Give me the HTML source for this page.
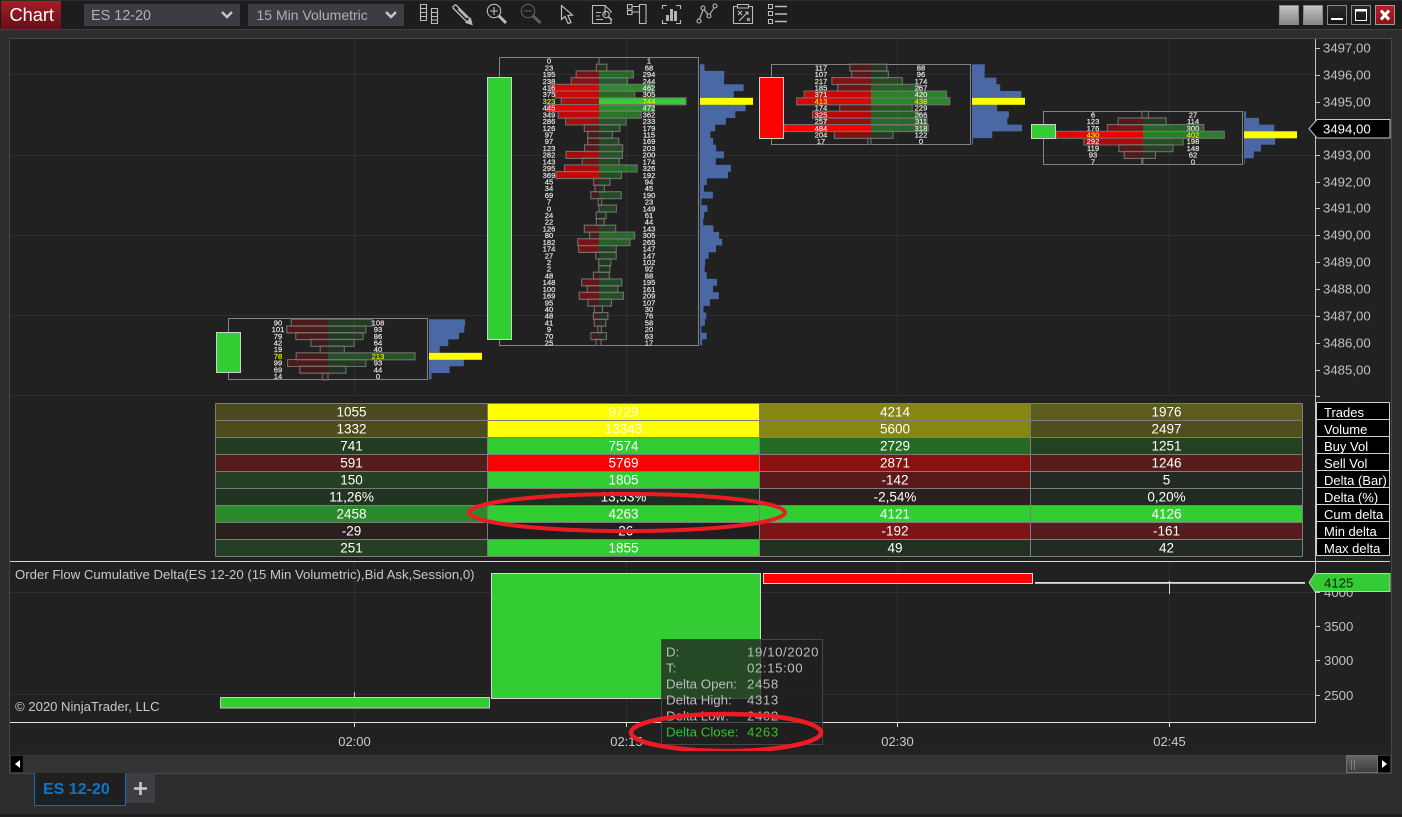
<!DOCTYPE html>
<html><head><meta charset="utf-8"><title>Chart</title>
<style>
html,body{margin:0;padding:0;width:1402px;height:817px;overflow:hidden;background:#2d2d30}
svg{display:block;font-family:"Liberation Sans",Arial,sans-serif}
.s{fill:#f00}.b{fill:#32cd32}.o{fill:none;stroke:#707070;stroke-width:1.1}
.f text{font-size:7.6px;fill:#e4e4e4;stroke:#e4e4e4;stroke-width:.2;text-anchor:middle}
.f text.p{fill:#e6e600;stroke:#e6e600}
.px{font-size:13.2px;fill:#c0c0c0}
.c{font-size:13.5px;fill:#fff;text-anchor:middle}
.l{font-size:13px;fill:#fff}
.t{font-size:13px;fill:#cacaca;text-anchor:middle}
.tip{font-size:13.3px;fill:#bcbcbc}
.tv{letter-spacing:.55px}
.i{fill:none;stroke:#bcbcbc;stroke-width:1.1}
</style></head><body>
<svg width="1402" height="817" viewBox="0 0 1402 817" xmlns="http://www.w3.org/2000/svg">
<defs>
<linearGradient id="gc" x1="0" y1="0" x2="0" y2="1"><stop offset="0" stop-color="#a51e26"/><stop offset="1" stop-color="#65101a"/></linearGradient>
<linearGradient id="gg" x1="0" y1="0" x2="0" y2="1"><stop offset="0" stop-color="#c4c4c4"/><stop offset="1" stop-color="#858585"/></linearGradient>
<linearGradient id="gd" x1="0" y1="0" x2="0" y2="1"><stop offset="0" stop-color="#2a2a2a"/><stop offset="1" stop-color="#141414"/></linearGradient>
<linearGradient id="gr" x1="0" y1="0" x2="0" y2="1"><stop offset="0" stop-color="#b52026"/><stop offset="1" stop-color="#8a1218"/></linearGradient>
<linearGradient id="gt" x1="0" y1="0" x2="0" y2="1"><stop offset="0" stop-color="#666"/><stop offset="1" stop-color="#3c3c3c"/></linearGradient>
</defs>

<!-- window chrome -->
<rect width="1402" height="817" fill="#2d2d30"/>
<rect width="1402" height="29" fill="#1d1d1d"/>
<rect y="0" width="1402" height="1" fill="#2d2d30"/>
<rect y="29" width="1402" height="1" fill="#414144"/>
<rect x="9" y="38" width="1383" height="1" fill="#47474a"/>
<rect x="1" y="1" width="60" height="28" fill="url(#gc)"/>
<text x="9.5" y="21" font-size="18.2" fill="#fff">Chart</text>
<rect x="84" y="4" width="156" height="22" fill="#3c3c42"/>
<text x="91" y="20" font-size="14.4" fill="#b0b0b0">ES 12-20</text>
<path d="M222 12l5 5 5-5" fill="none" stroke="#c8c8c8" stroke-width="2.4"/>
<rect x="248" y="4" width="156" height="22" fill="#3c3c42"/>
<text x="256.5" y="20" font-size="14" fill="#b0b0b0">15 Min Volumetric</text>
<path d="M386 12l5 5 5-5" fill="none" stroke="#c8c8c8" stroke-width="2.4"/>

<!-- toolbar icons -->
<g class="i">
<path d="M420.5 4.5h6v16h-6zM420.5 8.5h6M420.5 12.5h6M420.5 16.5h6M431.5 8.5h6v15h-6zM431.5 12.5h6M431.5 16.5h6M431.5 20h6"/>
<path d="M455.5 4.5L470.5 19.5M452.5 7.5L467.5 22.5M455.5 4.5L452.5 7.5M458 9L467 18M456 11L465 20" stroke-width="1.3"/>
<path d="M472 24.5L466 22.5L470.5 18.5z" fill="#b4b4b4"/>
<circle cx="494" cy="11" r="6.7"/><path d="M494 7v8M490 11h8"/>
<path d="M499 16L506 23" stroke-width="3"/>
<g style="stroke:#5e5e5e"><circle cx="528" cy="11" r="6.7"/><path d="M524 11h8"/><path d="M533 16L540.5 23" stroke-width="3"/></g>
<path d="M561.5 5.5V19.5L565 16.5L568 23.5L571 22.5L568 15.5L572.5 15z" stroke-width="1.2"/>
<path d="M605 15.5V5.5H592.5V23.5H611V19.5M605 5.5L611 11.5V13M596 12.5h5M596 16h4M596 19.5h7"/>
<circle cx="606" cy="14.5" r="3.2"/><path d="M608.5 17L612 20" stroke-width="1.6"/>
<path d="M627.5 4.5h4.5v4.5h-4.5zM627.5 10.5h4.5v4h-4.5zM632 6.5h8M632 12h8M639.5 4.5h6.5v19h-6.5z"/>
<path d="M662.5 9V5.5H667M676 5.5h4.5V9M662.5 20V23.5H667M676 23.5h4.5V20"/>
<path d="M666 15h3v6h-3zM670 9h3v12h-3zM674 11h3v10h-3z" fill="#b4b4b4" stroke="none"/>
<path d="M699.5 19L703 10M704 9.5L708 14.5M710 14L714 8"/>
<circle cx="699" cy="21" r="2"/><circle cx="703" cy="8" r="2"/><circle cx="709" cy="16" r="2"/><circle cx="715" cy="6" r="2"/>
<path d="M737 6.5H733.5V23.5H752.5V6.5H749M737.5 4.5h11v3.5h-11zM738 11l4 4M742 11l-4 4M747 18l3 3M750 18l-3 3M739 21L748 12M745 12h3v3"/>
<path d="M768.5 4.5h4v4h-4zM768.5 11.5h4v4h-4zM768.5 19.5h4v4h-4z"/>
<path d="M775 6.5h12M775 14h12M775 21.5h12" stroke-width="1.5"/>
</g>

<!-- window buttons -->
<rect x="1279.5" y="5.5" width="19" height="19" fill="url(#gg)" stroke="#888"/>
<rect x="1303.5" y="5.5" width="19" height="19" fill="url(#gg)" stroke="#888"/>
<rect x="1327.5" y="5.5" width="19" height="19" fill="url(#gd)" stroke="#888"/>
<rect x="1331" y="18" width="12" height="2" fill="#fff"/>
<rect x="1351.5" y="5.5" width="19" height="19" fill="url(#gd)" stroke="#888"/>
<rect x="1355.5" y="9.5" width="11" height="11" fill="none" stroke="#fff"/><rect x="1355" y="9" width="12" height="2.5" fill="#fff"/>
<rect x="1375.5" y="5.5" width="19" height="19" fill="url(#gr)" stroke="#999"/>
<path d="M1381 10.5l8 9M1389 10.5l-8 9" stroke="#fff" stroke-width="3"/>

<!-- chart panel -->
<rect x="9.5" y="38.5" width="1382" height="734" fill="#212121" stroke="#47474a"/>

<!-- grid -->
<g stroke="#2f2f2f" stroke-width="1">
<path d="M354.5 39V395M626.5 39V395M897.5 39V395M1169.5 39V395M354.5 562V722M626.5 562V722M897.5 562V722M1169.5 562V722"/>
<path d="M10 74.5H1315M10 155.5H1315M10 235.5H1315M10 315.5H1315M10 395.5H1315M10 592.5H1315M10 694.5H1315"/>
</g>

<!-- price axis -->
<rect x="1315" y="39" width="1" height="683" fill="#c4c4c4"/>
<path d="M1315 48.5h5M1315 75.5h5M1315 102.5h5M1315 155.5h5M1315 182.5h5M1315 208.5h5M1315 235.5h5M1315 262.5h5M1315 289.5h5M1315 316.5h5M1315 343.5h5M1315 370.5h5M1315 396.5h5M1315 592.5h5M1315 626.5h5M1315 660.5h5M1315 695.5h5" stroke="#c4c4c4"/>
<g class="px">
<text x="1323" y="52.5">3497,00</text>
<text x="1323" y="79.5">3496,00</text>
<text x="1323" y="106.5">3495,00</text>
<text x="1323" y="159.5">3493,00</text>
<text x="1323" y="186.5">3492,00</text>
<text x="1323" y="212.5">3491,00</text>
<text x="1323" y="239.5">3490,00</text>
<text x="1323" y="266.5">3489,00</text>
<text x="1323" y="293.5">3488,00</text>
<text x="1323" y="320.5">3487,00</text>
<text x="1323" y="347.5">3486,00</text>
<text x="1323" y="374.5">3485,00</text>
<text x="1324" y="597">4000</text>
<text x="1324" y="631">3500</text>
<text x="1324" y="665">3000</text>
<text x="1324" y="700">2500</text>
</g>
<path d="M1309 128.7L1317 119.5H1390V138H1317z" fill="#000" stroke="#c8c8c8"/>
<text x="1323" y="133.5" font-size="13.2" fill="#fff">3494,00</text>

<!-- profiles -->
<g fill="#4a68a4">
<path d="M429 319.2h36v6.8H429zM429 325.9h35.3v6.8H429zM429 332.6h30v6.8H429zM429 339.3h19.3v6.8H429zM429 346h10.7v6.8H429zM429 359.5h34.9v6.8H429zM429 366.2h20.6v6.8H429zM429 372.9h2.5v6.5H429z"/>
<path d="M700 64.2h4.5v6.8H700zM700 70.9h24.3v6.8H700zM700 77.6h24v6.8H700zM700 84.3h43.6v6.8H700zM700 91h33.8v6.8H700zM700 104.5h45.6v6.8H700zM700 111.2h35.3v6.8H700zM700 117.9h25.8v6.8H700zM700 124.6h15.2v6.8H700zM700 131.3h10.5v6.8H700zM700 138h13.2v6.8H700zM700 144.7h16.2v6.8H700zM700 151.4h24v6.8H700zM700 158.1h15.8v6.8H700zM700 164.9h30.9v6.8H700zM700 171.6h27.9v6.8H700zM700 178.3h6.9v6.8H700zM700 185h3.9v6.8H700zM700 191.7h12.9v6.8H700zM700 198.4h1.5v6.8H700zM700 205.1h7.4v6.8H700zM700 211.8h4.2v6.8H700zM700 218.5h3.3v6.8H700zM700 225.2h13.4v6.8H700zM700 232h19.1v6.8H700zM700 238.7h22.2v6.8H700zM700 245.4h16v6.8H700zM700 252.1h8.6v6.8H700zM700 258.8h5.2v6.8H700zM700 265.5h4.7v6.8H700zM700 272.2h6.8v6.8H700zM700 278.9h17v6.8H700zM700 285.6h13v6.8H700zM700 292.3h18.8v6.8H700zM700 299.1h10v6.8H700zM700 305.8h3.5v6.8H700zM700 312.5h6.2v6.8H700zM700 319.2h4.9v6.8H700zM700 325.9h1.4v6.8H700zM700 332.6h6.6v6.8H700zM700 339.3h2.1v6.2H700z"/>
<path d="M972 64.2h12.8v6.8H972zM972 70.9h12.6v6.8H972zM972 77.6h24.4v6.8H972zM972 84.3h28.2v6.8H972zM972 91h49.3v6.8H972zM972 104.5h25.1v6.8H972zM972 111.2h36.8v6.8H972zM972 117.9h35.4v6.8H972zM972 124.6h50v6.8H972zM972 131.3h20.3v6.8H972zM972 138h1v6.5H972z"/>
<path d="M1244 111.2h2.1v6.8H1244zM1244 117.9h15.1v6.8H1244zM1244 124.6h30.3v6.8H1244zM1244 138h31.2v6.8H1244zM1244 144.7h17v6.8H1244zM1244 151.4h9.9v6.8H1244zM1244 158.1h.8v6.2H1244z"/>
</g>
<g fill="#ff0">
<rect x="429" y="352.8" width="53" height="7"/>
<rect x="700" y="97.8" width="53" height="7"/>
<rect x="972" y="97.8" width="53" height="7"/>
<rect x="1244" y="131.3" width="53" height="7"/>
</g>

<!-- footprint boxes -->
<g fill="none" stroke="#838383">
<rect x="228.5" y="318.5" width="199" height="61"/>
<rect x="499.5" y="57.5" width="199" height="288"/>
<rect x="771.5" y="64.5" width="199" height="80"/>
<rect x="1043.5" y="111.5" width="199" height="53"/>
</g>

<!-- Footprint 1 -->
<g class="f" transform="translate(328 0)">
<g transform="translate(0 319.2)"><path class="s" fill-opacity=".19" d="M0 0h-36.7v7H0z"/><path class="b" fill-opacity=".15" d="M0 0h44.1v7H0z"/><path class="o" d="M-36.7 0H44.1v7H-36.7z"/><text x="-50" y="6.2">90</text><text x="50" y="6.2">108</text></g>
<g transform="translate(0 325.9)"><path class="s" fill-opacity=".21" d="M0 0h-41.2v7H0z"/><path class="b" fill-opacity=".15" d="M0 0h37.9v7H0z"/><path class="o" d="M-41.2 0H37.9v7H-41.2z"/><text x="-50" y="6.2">101</text><text x="50" y="6.2">93</text></g>
<g transform="translate(0 332.6)"><path class="s" fill-opacity=".18" d="M0 0h-32.2v7H0z"/><path class="b" fill-opacity=".15" d="M0 0h35.1v7H0z"/><path class="o" d="M-32.2 0H35.1v7H-32.2z"/><text x="-50" y="6.2">79</text><text x="50" y="6.2">86</text></g>
<g transform="translate(0 339.3)"><path class="s" fill-opacity=".12" d="M0 0h-17.1v7H0z"/><path class="b" fill-opacity=".12" d="M0 0h26.1v7H0z"/><path class="o" d="M-17.1 0H26.1v7H-17.1z"/><text x="-50" y="6.2">42</text><text x="50" y="6.2">64</text></g>
<g transform="translate(0 346)"><path class="s" fill-opacity=".1" d="M0 0h-7.8v7H0z"/><path class="b" fill-opacity=".12" d="M0 0h16.3v7H0z"/><path class="o" d="M-7.8 0H16.3v7H-7.8z"/><text x="-50" y="6.2">19</text><text x="50" y="6.2">40</text></g>
<g transform="translate(0 352.8)"><path class="s" fill-opacity=".18" d="M0 0h-31.8v7H0z"/><path class="b" fill-opacity=".29" d="M0 0h87v7H0z"/><path class="o" d="M-31.8 0H87v7H-31.8z"/><text class="p" x="-50" y="6.2">78</text><text class="p" x="50" y="6.2">213</text></g>
<g transform="translate(0 359.5)"><path class="s" fill-opacity=".2" d="M0 0h-40.4v7H0z"/><path class="b" fill-opacity=".15" d="M0 0h37.9v7H0z"/><path class="o" d="M-40.4 0H37.9v7H-40.4z"/><text x="-50" y="6.2">99</text><text x="50" y="6.2">93</text></g>
<g transform="translate(0 366.2)"><path class="s" fill-opacity=".15" d="M0 0h-28.2v7H0z"/><path class="b" fill-opacity=".1" d="M0 0h18v7H0z"/><path class="o" d="M-28.2 0H18v7H-28.2z"/><text x="-50" y="6.2">69</text><text x="50" y="6.2">44</text></g>
<g transform="translate(0 372.9)"><path class="s" fill-opacity=".1" d="M0 0h-5.7v7H0z"/><path class="o" d="M-5.7 0H0v7H-5.7z"/><text x="-50" y="6.2">14</text><text x="50" y="6.2">0</text></g>
</g>
<rect x="216.5" y="332.5" width="24" height="40" fill="#32cd32" stroke="#d0d0d0"/>

<!-- Footprint 2 -->
<g class="f" transform="translate(599 0)">
<g transform="translate(0 57.5)"><path class="o" d="M0 0v7"/><text x="-50" y="6.2">0</text><text x="50" y="6.2">1</text></g>
<g transform="translate(0 64.2)"><path class="s" fill-opacity=".15" d="M0 0h-2.7v7H0z"/><path class="b" fill-opacity=".15" d="M0 0h7.9v7H0z"/><path class="o" d="M-2.7 0H7.9v7H-2.7z"/><text x="-50" y="6.2">23</text><text x="50" y="6.2">68</text></g>
<g transform="translate(0 70.9)"><path class="s" fill-opacity=".4" d="M0 0h-22.8v7H0z"/><path class="b" fill-opacity=".4" d="M0 0h34.4v7H0z"/><path class="o" d="M-22.8 0H34.4v7H-22.8z"/><text x="-50" y="6.2">195</text><text x="50" y="6.2">294</text></g>
<g transform="translate(0 77.6)"><path class="s" fill-opacity=".49" d="M0 0h-27.8v7H0z"/><path class="b" fill-opacity=".33" d="M0 0h28.5v7H0z"/><path class="o" d="M-27.8 0H28.5v7H-27.8z"/><text x="-50" y="6.2">238</text><text x="50" y="6.2">244</text></g>
<g transform="translate(0 84.3)"><path class="s" fill-opacity=".86" d="M0 0h-48.6v7H0z"/><path class="b" fill-opacity=".62" d="M0 0h54v7H0z"/><path class="o" d="M-48.6 0H54v7H-48.6z"/><text x="-50" y="6.2">416</text><text x="50" y="6.2">462</text></g>
<g transform="translate(0 91)"><path class="s" fill-opacity=".77" d="M0 0h-43.8v7H0z"/><path class="b" fill-opacity=".41" d="M0 0h35.7v7H0z"/><path class="o" d="M-43.8 0H35.7v7H-43.8z"/><text x="-50" y="6.2">375</text><text x="50" y="6.2">305</text></g>
<g transform="translate(0 97.8)"><path class="s" fill-opacity=".67" d="M0 0h-37.8v7H0z"/><path class="b" d="M0 0h87v7H0z"/><path class="o" d="M-37.8 0H87v7H-37.8z"/><text class="p" x="-50" y="6.2">323</text><text class="p" x="50" y="6.2">744</text></g>
<g transform="translate(0 104.5)"><path class="s" fill-opacity=".92" d="M0 0h-52v7H0z"/><path class="b" fill-opacity=".63" d="M0 0h55.2v7H0z"/><path class="o" d="M-52 0H55.2v7H-52z"/><text x="-50" y="6.2">445</text><text x="50" y="6.2">472</text></g>
<g transform="translate(0 111.2)"><path class="s" fill-opacity=".72" d="M0 0h-40.8v7H0z"/><path class="b" fill-opacity=".49" d="M0 0h42.3v7H0z"/><path class="o" d="M-40.8 0H42.3v7H-40.8z"/><text x="-50" y="6.2">349</text><text x="50" y="6.2">362</text></g>
<g transform="translate(0 117.9)"><path class="s" fill-opacity=".59" d="M0 0h-33.4v7H0z"/><path class="b" fill-opacity=".31" d="M0 0h27.2v7H0z"/><path class="o" d="M-33.4 0H27.2v7H-33.4z"/><text x="-50" y="6.2">286</text><text x="50" y="6.2">233</text></g>
<g transform="translate(0 124.6)"><path class="s" fill-opacity=".26" d="M0 0h-14.7v7H0z"/><path class="b" fill-opacity=".24" d="M0 0h20.9v7H0z"/><path class="o" d="M-14.7 0H20.9v7H-14.7z"/><text x="-50" y="6.2">126</text><text x="50" y="6.2">179</text></g>
<g transform="translate(0 131.3)"><path class="s" fill-opacity=".2" d="M0 0h-11.3v7H0z"/><path class="b" fill-opacity=".15" d="M0 0h13.4v7H0z"/><path class="o" d="M-11.3 0H13.4v7H-11.3z"/><text x="-50" y="6.2">97</text><text x="50" y="6.2">115</text></g>
<g transform="translate(0 138)"><path class="s" fill-opacity=".2" d="M0 0h-11.3v7H0z"/><path class="b" fill-opacity=".23" d="M0 0h19.8v7H0z"/><path class="o" d="M-11.3 0H19.8v7H-11.3z"/><text x="-50" y="6.2">97</text><text x="50" y="6.2">169</text></g>
<g transform="translate(0 144.7)"><path class="s" fill-opacity=".25" d="M0 0h-14.4v7H0z"/><path class="b" fill-opacity=".27" d="M0 0h23.7v7H0z"/><path class="o" d="M-14.4 0H23.7v7H-14.4z"/><text x="-50" y="6.2">123</text><text x="50" y="6.2">203</text></g>
<g transform="translate(0 151.4)"><path class="s" fill-opacity=".58" d="M0 0h-33v7H0z"/><path class="b" fill-opacity=".27" d="M0 0h23.4v7H0z"/><path class="o" d="M-33 0H23.4v7H-33z"/><text x="-50" y="6.2">282</text><text x="50" y="6.2">200</text></g>
<g transform="translate(0 158.1)"><path class="s" fill-opacity=".3" d="M0 0h-16.7v7H0z"/><path class="b" fill-opacity=".23" d="M0 0h20.3v7H0z"/><path class="o" d="M-16.7 0H20.3v7H-16.7z"/><text x="-50" y="6.2">143</text><text x="50" y="6.2">174</text></g>
<g transform="translate(0 164.9)"><path class="s" fill-opacity=".61" d="M0 0h-34.5v7H0z"/><path class="b" fill-opacity=".44" d="M0 0h38.1v7H0z"/><path class="o" d="M-34.5 0H38.1v7H-34.5z"/><text x="-50" y="6.2">295</text><text x="50" y="6.2">326</text></g>
<g transform="translate(0 171.6)"><path class="s" fill-opacity=".76" d="M0 0h-43.1v7H0z"/><path class="b" fill-opacity=".26" d="M0 0h22.4v7H0z"/><path class="o" d="M-43.1 0H22.4v7H-43.1z"/><text x="-50" y="6.2">369</text><text x="50" y="6.2">192</text></g>
<g transform="translate(0 178.3)"><path class="s" fill-opacity=".15" d="M0 0h-5.3v7H0z"/><path class="b" fill-opacity=".15" d="M0 0h11v7H0z"/><path class="o" d="M-5.3 0H11v7H-5.3z"/><text x="-50" y="6.2">45</text><text x="50" y="6.2">94</text></g>
<g transform="translate(0 185)"><path class="s" fill-opacity=".15" d="M0 0h-4v7H0z"/><path class="b" fill-opacity=".1" d="M0 0h5.3v7H0z"/><path class="o" d="M-4 0H5.3v7H-4z"/><text x="-50" y="6.2">34</text><text x="50" y="6.2">45</text></g>
<g transform="translate(0 191.7)"><path class="s" fill-opacity=".16" d="M0 0h-8.1v7H0z"/><path class="b" fill-opacity=".26" d="M0 0h22.2v7H0z"/><path class="o" d="M-8.1 0H22.2v7H-8.1z"/><text x="-50" y="6.2">69</text><text x="50" y="6.2">190</text></g>
<g transform="translate(0 198.4)"><path class="o" d="M-.8 0H2.7v7H-.8z"/><text x="-50" y="6.2">7</text><text x="50" y="6.2">23</text></g>
<g transform="translate(0 205.1)"><path class="b" fill-opacity=".2" d="M0 0h17.4v7H0z"/><path class="o" d="M0 0H17.4v7H0z"/><text x="-50" y="6.2">0</text><text x="50" y="6.2">149</text></g>
<g transform="translate(0 211.8)"><path class="b" fill-opacity=".1" d="M0 0h7.1v7H0z"/><path class="o" d="M-2.8 0H7.1v7H-2.8z"/><text x="-50" y="6.2">24</text><text x="50" y="6.2">61</text></g>
<g transform="translate(0 218.5)"><path class="b" fill-opacity=".08" d="M0 0h5.1v7H0z"/><path class="o" d="M-2.6 0H5.1v7H-2.6z"/><text x="-50" y="6.2">22</text><text x="50" y="6.2">44</text></g>
<g transform="translate(0 225.2)"><path class="s" fill-opacity=".26" d="M0 0h-14.7v7H0z"/><path class="b" fill-opacity=".19" d="M0 0h16.7v7H0z"/><path class="o" d="M-14.7 0H16.7v7H-14.7z"/><text x="-50" y="6.2">126</text><text x="50" y="6.2">143</text></g>
<g transform="translate(0 232)"><path class="s" fill-opacity=".17" d="M0 0h-9.4v7H0z"/><path class="b" fill-opacity=".41" d="M0 0h35.7v7H0z"/><path class="o" d="M-9.4 0H35.7v7H-9.4z"/><text x="-50" y="6.2">80</text><text x="50" y="6.2">305</text></g>
<g transform="translate(0 238.7)"><path class="s" fill-opacity=".38" d="M0 0h-21.3v7H0z"/><path class="b" fill-opacity=".36" d="M0 0h31v7H0z"/><path class="o" d="M-21.3 0H31v7H-21.3z"/><text x="-50" y="6.2">182</text><text x="50" y="6.2">265</text></g>
<g transform="translate(0 245.4)"><path class="s" fill-opacity=".36" d="M0 0h-20.3v7H0z"/><path class="b" fill-opacity=".2" d="M0 0h17.2v7H0z"/><path class="o" d="M-20.3 0H17.2v7H-20.3z"/><text x="-50" y="6.2">174</text><text x="50" y="6.2">147</text></g>
<g transform="translate(0 252.1)"><path class="s" fill-opacity=".1" d="M0 0h-3.2v7H0z"/><path class="b" fill-opacity=".2" d="M0 0h17.2v7H0z"/><path class="o" d="M-3.2 0H17.2v7H-3.2z"/><text x="-50" y="6.2">27</text><text x="50" y="6.2">147</text></g>
<g transform="translate(0 258.8)"><path class="b" fill-opacity=".14" d="M0 0h11.9v7H0z"/><path class="o" d="M-.2 0H11.9v7H-.2z"/><text x="-50" y="6.2">2</text><text x="50" y="6.2">102</text></g>
<g transform="translate(0 265.5)"><path class="b" fill-opacity=".12" d="M0 0h10.8v7H0z"/><path class="o" d="M-.2 0H10.8v7H-.2z"/><text x="-50" y="6.2">2</text><text x="50" y="6.2">92</text></g>
<g transform="translate(0 272.2)"><path class="s" fill-opacity=".15" d="M0 0h-5.6v7H0z"/><path class="b" fill-opacity=".12" d="M0 0h10.3v7H0z"/><path class="o" d="M-5.6 0H10.3v7H-5.6z"/><text x="-50" y="6.2">48</text><text x="50" y="6.2">88</text></g>
<g transform="translate(0 278.9)"><path class="s" fill-opacity=".31" d="M0 0h-17.3v7H0z"/><path class="b" fill-opacity=".26" d="M0 0h22.8v7H0z"/><path class="o" d="M-17.3 0H22.8v7H-17.3z"/><text x="-50" y="6.2">148</text><text x="50" y="6.2">195</text></g>
<g transform="translate(0 285.6)"><path class="s" fill-opacity=".21" d="M0 0h-11.7v7H0z"/><path class="b" fill-opacity=".22" d="M0 0h18.8v7H0z"/><path class="o" d="M-11.7 0H18.8v7H-11.7z"/><text x="-50" y="6.2">100</text><text x="50" y="6.2">161</text></g>
<g transform="translate(0 292.3)"><path class="s" fill-opacity=".35" d="M0 0h-19.8v7H0z"/><path class="b" fill-opacity=".28" d="M0 0h24.4v7H0z"/><path class="o" d="M-19.8 0H24.4v7H-19.8z"/><text x="-50" y="6.2">169</text><text x="50" y="6.2">209</text></g>
<g transform="translate(0 299.1)"><path class="s" fill-opacity=".2" d="M0 0h-11.1v7H0z"/><path class="b" fill-opacity=".15" d="M0 0h12.5v7H0z"/><path class="o" d="M-11.1 0H12.5v7H-11.1z"/><text x="-50" y="6.2">95</text><text x="50" y="6.2">107</text></g>
<g transform="translate(0 305.8)"><path class="s" fill-opacity=".12" d="M0 0h-4.7v7H0z"/><path class="b" fill-opacity=".05" d="M0 0h3.5v7H0z"/><path class="o" d="M-4.7 0H3.5v7H-4.7z"/><text x="-50" y="6.2">40</text><text x="50" y="6.2">30</text></g>
<g transform="translate(0 312.5)"><path class="s" fill-opacity=".15" d="M0 0h-5.6v7H0z"/><path class="b" fill-opacity=".1" d="M0 0h8.9v7H0z"/><path class="o" d="M-5.6 0H8.9v7H-5.6z"/><text x="-50" y="6.2">48</text><text x="50" y="6.2">76</text></g>
<g transform="translate(0 319.2)"><path class="s" fill-opacity=".12" d="M0 0h-4.8v7H0z"/><path class="b" fill-opacity=".08" d="M0 0h6.8v7H0z"/><path class="o" d="M-4.8 0H6.8v7H-4.8z"/><text x="-50" y="6.2">41</text><text x="50" y="6.2">58</text></g>
<g transform="translate(0 325.9)"><path class="o" d="M-1.1 0H2.3v7H-1.1z"/><text x="-50" y="6.2">9</text><text x="50" y="6.2">20</text></g>
<g transform="translate(0 332.6)"><path class="s" fill-opacity=".15" d="M0 0h-8.2v7H0z"/><path class="b" fill-opacity=".08" d="M0 0h7.4v7H0z"/><path class="o" d="M-8.2 0H7.4v7H-8.2z"/><text x="-50" y="6.2">70</text><text x="50" y="6.2">63</text></g>
<g transform="translate(0 339.3)"><path class="o" d="M-2.9 0H2v6.2H-2.9z"/><text x="-50" y="6.2">25</text><text x="50" y="6.2">17</text></g>
</g>
<rect x="487.5" y="77.5" width="24" height="262" fill="#32cd32" stroke="#d0d0d0"/>

<!-- Footprint 3 -->
<g class="f" transform="translate(871 0)">
<g transform="translate(0 64.2)"><path class="s" fill-opacity=".24" d="M0 0h-21.1v7H0z"/><path class="b" fill-opacity=".12" d="M0 0h15.8v7H0z"/><path class="o" d="M-21.1 0H15.8v7H-21.1z"/><text x="-50" y="6.2">117</text><text x="50" y="6.2">88</text></g>
<g transform="translate(0 70.9)"><path class="s" fill-opacity=".22" d="M0 0h-19.3v7H0z"/><path class="b" fill-opacity=".13" d="M0 0h17.3v7H0z"/><path class="o" d="M-19.3 0H17.3v7H-19.3z"/><text x="-50" y="6.2">107</text><text x="50" y="6.2">96</text></g>
<g transform="translate(0 77.6)"><path class="s" fill-opacity=".45" d="M0 0h-39.1v7H0z"/><path class="b" fill-opacity=".23" d="M0 0h31.3v7H0z"/><path class="o" d="M-39.1 0H31.3v7H-39.1z"/><text x="-50" y="6.2">217</text><text x="50" y="6.2">174</text></g>
<g transform="translate(0 84.3)"><path class="s" fill-opacity=".38" d="M0 0h-33.3v7H0z"/><path class="b" fill-opacity=".36" d="M0 0h48.1v7H0z"/><path class="o" d="M-33.3 0H48.1v7H-33.3z"/><text x="-50" y="6.2">185</text><text x="50" y="6.2">267</text></g>
<g transform="translate(0 91)"><path class="s" fill-opacity=".77" d="M0 0h-66.8v7H0z"/><path class="b" fill-opacity=".56" d="M0 0h75.6v7H0z"/><path class="o" d="M-66.8 0H75.6v7H-66.8z"/><text x="-50" y="6.2">371</text><text x="50" y="6.2">420</text></g>
<g transform="translate(0 97.8)"><path class="s" fill-opacity=".85" d="M0 0h-74.3v7H0z"/><path class="b" fill-opacity=".59" d="M0 0h78.8v7H0z"/><path class="o" d="M-74.3 0H78.8v7H-74.3z"/><text class="p" x="-50" y="6.2">413</text><text class="p" x="50" y="6.2">438</text></g>
<g transform="translate(0 104.5)"><path class="s" fill-opacity=".36" d="M0 0h-31.3v7H0z"/><path class="b" fill-opacity=".31" d="M0 0h41.2v7H0z"/><path class="o" d="M-31.3 0H41.2v7H-31.3z"/><text x="-50" y="6.2">174</text><text x="50" y="6.2">229</text></g>
<g transform="translate(0 111.2)"><path class="s" fill-opacity=".67" d="M0 0h-58.5v7H0z"/><path class="b" fill-opacity=".36" d="M0 0h47.9v7H0z"/><path class="o" d="M-58.5 0H47.9v7H-58.5z"/><text x="-50" y="6.2">325</text><text x="50" y="6.2">266</text></g>
<g transform="translate(0 117.9)"><path class="s" fill-opacity=".53" d="M0 0h-46.3v7H0z"/><path class="b" fill-opacity=".42" d="M0 0h56v7H0z"/><path class="o" d="M-46.3 0H56v7H-46.3z"/><text x="-50" y="6.2">257</text><text x="50" y="6.2">311</text></g>
<g transform="translate(0 124.6)"><path class="s" d="M0 0h-87.1v7H0z"/><path class="b" fill-opacity=".43" d="M0 0h57.2v7H0z"/><path class="o" d="M-87.1 0H57.2v7H-87.1z"/><text x="-50" y="6.2">484</text><text x="50" y="6.2">318</text></g>
<g transform="translate(0 131.3)"><path class="s" fill-opacity=".42" d="M0 0h-36.7v7H0z"/><path class="b" fill-opacity=".16" d="M0 0h22v7H0z"/><path class="o" d="M-36.7 0H22v7H-36.7z"/><text x="-50" y="6.2">204</text><text x="50" y="6.2">122</text></g>
<g transform="translate(0 138)"><path class="o" d="M-3.1 0H0v6.5H-3.1z"/><text x="-50" y="6.2">17</text><text x="50" y="6.2">0</text></g>
</g>
<rect x="759.5" y="77.5" width="24" height="61" fill="#f00" stroke="#d0d0d0"/>

<!-- Footprint 4 -->
<g class="f" transform="translate(1143 0)">
<g transform="translate(0 111.2)"><path class="b" fill-opacity=".08" d="M0 0h5.5v7H0z"/><path class="o" d="M-1.2 0H5.5v7H-1.2z"/><text x="-50" y="6.2">6</text><text x="50" y="6.2">27</text></g>
<g transform="translate(0 117.9)"><path class="s" fill-opacity=".25" d="M0 0h-24.9v7H0z"/><path class="b" fill-opacity=".15" d="M0 0h23.1v7H0z"/><path class="o" d="M-24.9 0H23.1v7H-24.9z"/><text x="-50" y="6.2">123</text><text x="50" y="6.2">114</text></g>
<g transform="translate(0 124.6)"><path class="s" fill-opacity=".36" d="M0 0h-35.6v7H0z"/><path class="b" fill-opacity=".4" d="M0 0h60.7v7H0z"/><path class="o" d="M-35.6 0H60.7v7H-35.6z"/><text x="-50" y="6.2">176</text><text x="50" y="6.2">300</text></g>
<g transform="translate(0 131.3)"><path class="s" fill-opacity=".89" d="M0 0h-87v7H0z"/><path class="b" fill-opacity=".54" d="M0 0h81.3v7H0z"/><path class="o" d="M-87 0H81.3v7H-87z"/><text class="p" x="-50" y="6.2">430</text><text class="p" x="50" y="6.2">402</text></g>
<g transform="translate(0 138)"><path class="s" fill-opacity=".6" d="M0 0h-59.1v7H0z"/><path class="b" fill-opacity=".27" d="M0 0h40.1v7H0z"/><path class="o" d="M-59.1 0H40.1v7H-59.1z"/><text x="-50" y="6.2">292</text><text x="50" y="6.2">198</text></g>
<g transform="translate(0 144.7)"><path class="s" fill-opacity=".25" d="M0 0h-24.1v7H0z"/><path class="b" fill-opacity=".2" d="M0 0h29.9v7H0z"/><path class="o" d="M-24.1 0H29.9v7H-24.1z"/><text x="-50" y="6.2">119</text><text x="50" y="6.2">148</text></g>
<g transform="translate(0 151.4)"><path class="s" fill-opacity=".19" d="M0 0h-18.8v7H0z"/><path class="b" fill-opacity=".08" d="M0 0h12.5v7H0z"/><path class="o" d="M-18.8 0H12.5v7H-18.8z"/><text x="-50" y="6.2">93</text><text x="50" y="6.2">62</text></g>
<g transform="translate(0 158.1)"><path class="o" d="M-1.4 0H0v6H-1.4z"/><text x="-50" y="6.2">7</text><text x="50" y="6.2">0</text></g>
</g>
<rect x="1031.5" y="124.5" width="24" height="14" fill="#32cd32" stroke="#d0d0d0"/>

<!-- Table -->
<g>
<rect x="215.5" y="403.5" width="272" height="17" fill="#4a4a1d"/><rect x="487.5" y="403.5" width="272" height="17" fill="#ff0"/><rect x="759.5" y="403.5" width="271" height="17" fill="#868612"/><rect x="1030.5" y="403.5" width="272" height="17" fill="#5c5c1e"/>
<rect x="215.5" y="420.5" width="272" height="17" fill="#4c4c1d"/><rect x="487.5" y="420.5" width="272" height="17" fill="#ff0"/><rect x="759.5" y="420.5" width="271" height="17" fill="#868612"/><rect x="1030.5" y="420.5" width="272" height="17" fill="#4f4f1e"/>
<rect x="215.5" y="437.5" width="272" height="17" fill="#223d22"/><rect x="487.5" y="437.5" width="272" height="17" fill="#32cd32"/><rect x="759.5" y="437.5" width="271" height="17" fill="#266a28"/><rect x="1030.5" y="437.5" width="272" height="17" fill="#224222"/>
<rect x="215.5" y="454.5" width="272" height="17" fill="#551c1c"/><rect x="487.5" y="454.5" width="272" height="17" fill="#f00"/><rect x="759.5" y="454.5" width="271" height="17" fill="#8b1010"/><rect x="1030.5" y="454.5" width="272" height="17" fill="#571c1c"/>
<rect x="215.5" y="471.5" width="272" height="17" fill="#243f24"/><rect x="487.5" y="471.5" width="272" height="17" fill="#32cd32"/><rect x="759.5" y="471.5" width="271" height="17" fill="#581a1a"/><rect x="1030.5" y="471.5" width="272" height="17" fill="#212b23"/>
<rect x="215.5" y="488.5" width="272" height="17" fill="#213421"/><rect x="487.5" y="488.5" width="272" height="17" fill="#1f2f1f"/><rect x="759.5" y="488.5" width="271" height="17" fill="#2b1f20"/><rect x="1030.5" y="488.5" width="272" height="17" fill="#212b23"/>
<rect x="215.5" y="505.5" width="272" height="17" fill="#2b8a2b"/><rect x="487.5" y="505.5" width="272" height="17" fill="#32cd32"/><rect x="759.5" y="505.5" width="271" height="17" fill="#32cd32"/><rect x="1030.5" y="505.5" width="272" height="17" fill="#32cd32"/>
<rect x="215.5" y="522.5" width="272" height="17" fill="#2a1f1f"/><rect x="487.5" y="522.5" width="272" height="17" fill="#1f1f1f"/><rect x="759.5" y="522.5" width="271" height="17" fill="#7e1414"/><rect x="1030.5" y="522.5" width="272" height="17" fill="#571c1c"/>
<rect x="215.5" y="539.5" width="272" height="17" fill="#243f24"/><rect x="487.5" y="539.5" width="272" height="17" fill="#32cd32"/><rect x="759.5" y="539.5" width="271" height="17" fill="#223022"/><rect x="1030.5" y="539.5" width="272" height="17" fill="#212b23"/>
<path d="M215.5 403.5H1302.5M215.5 420.5H1302.5M215.5 437.5H1302.5M215.5 454.5H1302.5M215.5 471.5H1302.5M215.5 488.5H1302.5M215.5 505.5H1302.5M215.5 522.5H1302.5M215.5 539.5H1302.5M215.5 556.5H1302.5M215.5 403.5V556.5M487.5 403.5V556.5M759.5 403.5V556.5M1030.5 403.5V556.5M1302.5 403.5V556.5" stroke="#7c7c7c" fill="none"/>
</g>
<g class="c">
<text x="351.5" y="416.5">1055</text><text x="623.5" y="416.5">9729</text><text x="895" y="416.5">4214</text><text x="1166.5" y="416.5">1976</text>
<text x="351.5" y="433.5">1332</text><text x="623.5" y="433.5">13343</text><text x="895" y="433.5">5600</text><text x="1166.5" y="433.5">2497</text>
<text x="351.5" y="450.5">741</text><text x="623.5" y="450.5">7574</text><text x="895" y="450.5">2729</text><text x="1166.5" y="450.5">1251</text>
<text x="351.5" y="467.5">591</text><text x="623.5" y="467.5">5769</text><text x="895" y="467.5">2871</text><text x="1166.5" y="467.5">1246</text>
<text x="351.5" y="484.5">150</text><text x="623.5" y="484.5">1805</text><text x="895" y="484.5">-142</text><text x="1166.5" y="484.5">5</text>
<text x="351.5" y="501.5">11,26%</text><text x="623.5" y="501.5">13,53%</text><text x="895" y="501.5">-2,54%</text><text x="1166.5" y="501.5">0,20%</text>
<text x="351.5" y="518.5">2458</text><text x="623.5" y="518.5">4263</text><text x="895" y="518.5">4121</text><text x="1166.5" y="518.5">4126</text>
<text x="351.5" y="535.5">-29</text><text x="623.5" y="535.5">-26</text><text x="895" y="535.5">-192</text><text x="1166.5" y="535.5">-161</text>
<text x="351.5" y="552.5">251</text><text x="623.5" y="552.5">1855</text><text x="895" y="552.5">49</text><text x="1166.5" y="552.5">42</text>
</g>
<!-- row labels -->
<rect x="1316.5" y="402.5" width="73" height="153" fill="#000"/>
<path d="M1316.5 402.5H1389.5M1316.5 419.5H1389.5M1316.5 436.5H1389.5M1316.5 453.5H1389.5M1316.5 470.5H1389.5M1316.5 487.5H1389.5M1316.5 504.5H1389.5M1316.5 521.5H1389.5M1316.5 538.5H1389.5M1316.5 555.5H1389.5M1316.5 402.5V555.5M1389.5 402.5V555.5" stroke="#d0d0d0" fill="none"/>
<g class="l">
<text x="1324" y="417">Trades</text>
<text x="1324" y="434">Volume</text>
<text x="1324" y="451">Buy Vol</text>
<text x="1324" y="468">Sell Vol</text>
<text x="1324" y="485">Delta (Bar)</text>
<text x="1324" y="502">Delta (%)</text>
<text x="1324" y="519">Cum delta</text>
<text x="1324" y="536">Min delta</text>
<text x="1324" y="553">Max delta</text>
</g>

<!-- separator -->
<rect x="10" y="561" width="1380" height="1" fill="#d8d8d8"/>

<!-- lower panel -->
<text x="15" y="579" font-size="13.2" fill="#c8c8c8">Order Flow Cumulative Delta(ES 12-20 (15 Min Volumetric),Bid Ask,Session,0)</text>
<rect x="354" y="692" width="1" height="6" fill="#ccc"/>
<rect x="220.5" y="697.5" width="269" height="10.5" fill="#32cd32" stroke="#c8c8c8"/>
<rect x="491.5" y="573.5" width="269" height="125" fill="#32cd32" stroke="#d8d8d8"/>
<rect x="763.5" y="573.5" width="269" height="10" fill="#f00" stroke="#d8d8d8"/>
<rect x="1035" y="582" width="270" height="1.8" fill="#dcdcdc"/>
<rect x="1169" y="581" width="1" height="13" fill="#dcdcdc"/>
<text x="15" y="711" font-size="13.1" fill="#c8c8c8">© 2020 NinjaTrader, LLC</text>
<path d="M1309 582.5L1315 573.5H1390V591.5H1315z" fill="#32cd32" stroke="#c8c8c8"/>
<text x="1324" y="587.5" font-size="13.2" fill="#0a1a0a">4125</text>

<!-- time axis -->
<rect x="10" y="722" width="1306" height="1" fill="#e0e0e0"/>
<path d="M354.5 722v5M626.5 722v5M897.5 722v5M1169.5 722v5" stroke="#ddd"/>
<g class="t">
<text x="354.5" y="746">02:00</text>
<text x="626.5" y="746">02:15</text>
<text x="897.5" y="746">02:30</text>
<text x="1169.5" y="746">02:45</text>
</g>

<!-- tooltip -->
<rect x="661.5" y="639.5" width="161" height="105" fill="#202020" fill-opacity=".76" stroke="#464646"/>
<g class="tip">
<text x="666" y="656.5">D:</text><text class="tv" x="747" y="656.5">19/10/2020</text>
<text x="666" y="672.5">T:</text><text class="tv" x="747" y="672.5">02:15:00</text>
<text x="666" y="688.5">Delta Open:</text><text class="tv" x="747" y="688.5">2458</text>
<text x="666" y="704.5">Delta High:</text><text class="tv" x="747" y="704.5">4313</text>
<text x="666" y="720.5">Delta Low:</text><text class="tv" x="747" y="720.5">2402</text>
<text x="666" y="736.5" style="fill:#2ec42e">Delta Close:</text><text class="tv" x="747" y="736.5" style="fill:#2ec42e">4263</text>
</g>

<!-- annotations -->
<ellipse cx="627" cy="512.5" rx="158" ry="18.5" fill="none" stroke="#ed1c24" stroke-width="4"/>
<ellipse cx="726" cy="732.5" rx="95" ry="18.5" fill="none" stroke="#ed1c24" stroke-width="4.5"/>

<!-- scrollbar area -->
<rect x="10" y="751" width="1381" height="4" fill="#232323"/>
<rect x="10" y="755" width="1381" height="18" fill="#343434"/>
<rect x="11" y="756" width="12" height="16" fill="#000"/>
<path d="M20 760v8l-5-4z" fill="#fff"/>
<rect x="1346.5" y="755.5" width="31" height="17" fill="url(#gt)" stroke="#6e6e6e"/>
<path d="M1351.5 760v10M1354.5 760v10" stroke="#7d7d7d"/>
<rect x="1378" y="756" width="12" height="16" fill="#000"/>
<path d="M1382 760v8l5-4z" fill="#fff"/>
<rect x="9" y="773" width="1383" height="1" fill="#47474a"/>

<!-- tabs -->
<path d="M34.5 773V805.5H125.5V773" fill="#1f1f1f" stroke="#0b6fbd"/>
<text x="43" y="794" font-size="16" font-weight="bold" fill="#0f76c6">ES 12-20</text>
<rect x="126" y="773" width="29" height="30" fill="#3e3e43"/>
<path d="M134 788.5h13M140.5 782v13" stroke="#c8c8c8" stroke-width="2.6"/>
<rect y="814" width="1402" height="3" fill="#1f1f1f"/>
</svg>
</body></html>
